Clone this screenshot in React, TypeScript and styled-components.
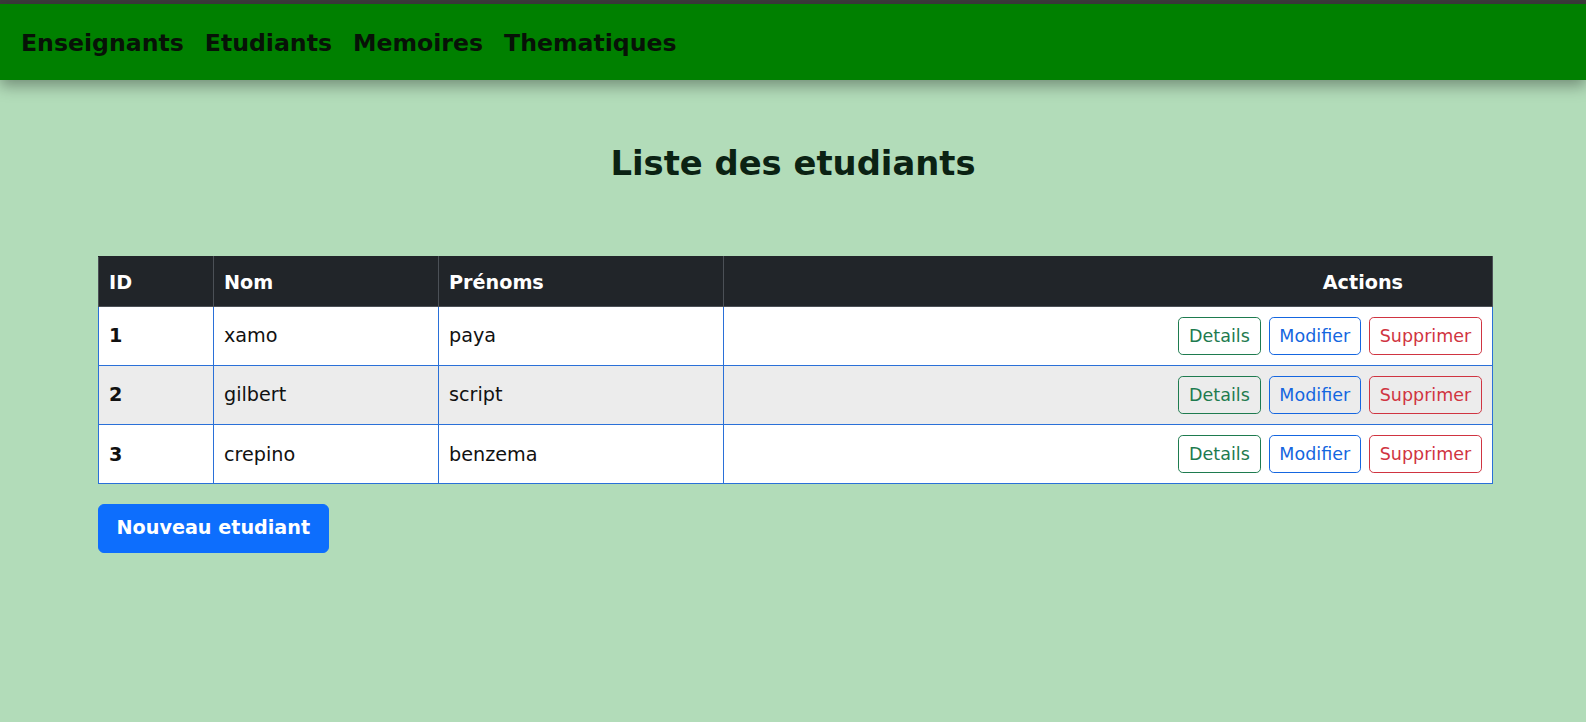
import React from "react";
import styled, { createGlobalStyle } from "styled-components";

const Global = createGlobalStyle`
  html, body { margin: 0; padding: 0; }
  body {
    background: #b2dcb9;
    font-family: "DejaVu Sans", Verdana, sans-serif;
    font-size: 19.2px;
    color: #111;
  }
  * { box-sizing: border-box; }
`;

const Page = styled.div`
  min-height: 722px;
  border-top: 4px solid #3b3b3b;
`;

const NavBar = styled.nav`
  height: 76px;
  background: #008000;
  display: flex;
  align-items: center;
  gap: 21px;
  padding: 2px 0 0 21px;
  box-shadow: 0 6px 14px rgba(0, 0, 0, 0.35);
  position: relative;
`;

const NavLink = styled.a`
  font-weight: 700;
  font-size: 23.6px;
  color: #071207;
  text-decoration: none;
  cursor: pointer;
`;

const Main = styled.main`
  padding: 64px 93px 0 98px;
`;

const Title = styled.h1`
  margin: 0 -93px 71px -98px;
  font-size: 33.8px;
  line-height: 1.2;
  font-weight: 700;
  text-align: center;
  color: #0b2213;
`;

const Table = styled.table`
  width: 100%;
  border-collapse: collapse;
  border: 1px solid #2a70d8;
`;

const Th = styled.th<{ $w?: number; $right?: boolean }>`
  background: #212529;
  color: #fff;
  font-weight: 700;
  text-align: ${(p) => (p.$right ? "right" : "left")};
  padding: ${(p) => (p.$right ? "3px 89px 0 10px" : "3px 10px 0")};
  height: 50px;
  border: 1px solid #4b5056;
  border-top-color: #212529;
  width: ${(p) => (p.$w ? `${p.$w}px` : "auto")};
  vertical-align: middle;
`;

const Tr = styled.tr<{ $striped?: boolean }>`
  background: ${(p) => (p.$striped ? "#ececec" : "#fff")};
`;

const Td = styled.td<{ $bold?: boolean; $right?: boolean }>`
  border: 1px solid #2a70d8;
  padding: 10px 10px;
  height: 59.3px;
  font-weight: ${(p) => (p.$bold ? 700 : 400)};
  text-align: ${(p) => (p.$right ? "right" : "left")};
  vertical-align: middle;
  color: #111;
`;

const Actions = styled.div`
  display: inline-flex;
  gap: 8px;
`;

const OutlineButton = styled.button<{ $color: string }>`
  font-family: inherit;
  font-size: 17.5px;
  line-height: 1.5;
  padding: 4.8px 9.8px;
  border-radius: 4.8px;
  background: transparent;
  border: 1.2px solid ${(p) => p.$color};
  color: ${(p) => p.$color};
  cursor: pointer;
`;

const PrimaryButton = styled.button`
  margin-top: 20px;
  font-family: inherit;
  font-size: 19.2px;
  font-weight: 700;
  line-height: 1.5;
  padding: 9px 17.5px;
  border-radius: 6px;
  border: 1.2px solid #0d6efd;
  background: #0d6efd;
  color: #fff;
  cursor: pointer;
`;

const students = [
  { id: 1, nom: "xamo", prenoms: "paya" },
  { id: 2, nom: "gilbert", prenoms: "script" },
  { id: 3, nom: "crepino", prenoms: "benzema" },
];

export default function App() {
  return (
    <Page>
      <Global />
      <NavBar>
        <NavLink>Enseignants</NavLink>
        <NavLink>Etudiants</NavLink>
        <NavLink>Memoires</NavLink>
        <NavLink>Thematiques</NavLink>
      </NavBar>
      <Main>
        <Title>Liste des etudiants</Title>
        <Table>
          <thead>
            <tr>
              <Th $w={115}>ID</Th>
              <Th $w={225}>Nom</Th>
              <Th $w={285}>Prénoms</Th>
              <Th $right>Actions</Th>
            </tr>
          </thead>
          <tbody>
            {students.map((s, i) => (
              <Tr key={s.id} $striped={i % 2 === 1}>
                <Td $bold>{s.id}</Td>
                <Td>{s.nom}</Td>
                <Td>{s.prenoms}</Td>
                <Td $right>
                  <Actions>
                    <OutlineButton $color="#1e7b4f">Details</OutlineButton>
                    <OutlineButton $color="#1566e0">Modifier</OutlineButton>
                    <OutlineButton $color="#d03441">Supprimer</OutlineButton>
                  </Actions>
                </Td>
              </Tr>
            ))}
          </tbody>
        </Table>
        <PrimaryButton>Nouveau etudiant</PrimaryButton>
      </Main>
    </Page>
  );
}
